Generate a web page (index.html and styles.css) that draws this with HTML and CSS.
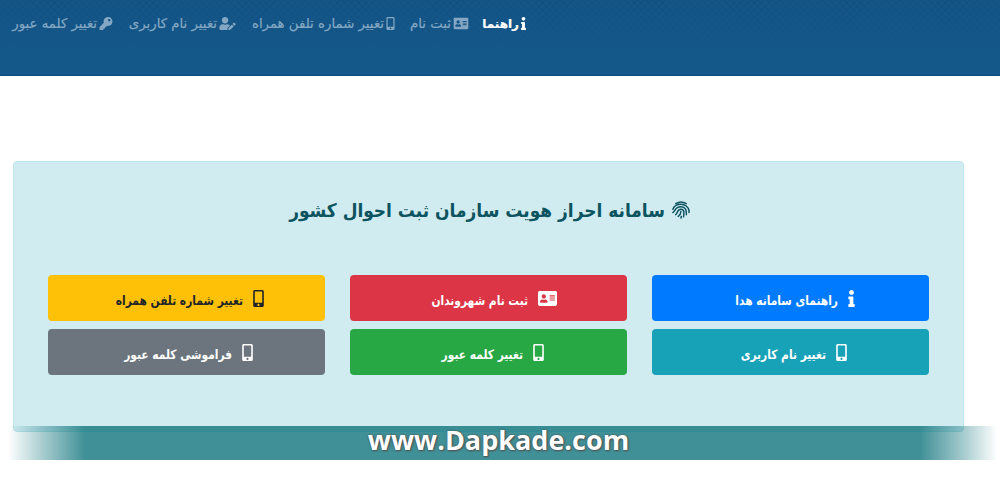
FILE: index.html
```
<!DOCTYPE html>
<html lang="fa" dir="rtl">
<head>
    <meta charset="UTF-8">
    <meta name="viewport" content="width=device-width, initial-scale=1.0">
    <title>سامانه احراز هویت</title>
    <link rel="stylesheet" href="styles.css">
</head>
<body>
    <svg class="sprite">
        <symbol id="info" viewBox="0 0 192 512"><path d="M20 424.229h20V279.771H20c-11.046 0-20-8.954-20-20V212c0-11.046 8.954-20 20-20h112c11.046 0 20 8.954 20 20v212.229h20c11.046 0 20 8.954 20 20V492c0 11.046-8.954 20-20 20H20c-11.046 0-20-8.954-20-20v-47.771c0-11.046 8.954-20 20-20zM96 0C56.235 0 24 32.235 24 72s32.235 72 72 72 72-32.235 72-72S135.764 0 96 0z"/></symbol>
        <symbol id="card" viewBox="0 0 576 512"><path d="M528 32H48C21.500 32 0 53.500 0 80v352c0 26.500 21.500 48 48 48h480c26.500 0 48-21.500 48-48V80c0-26.500-21.500-48-48-48zm-352 96c35.300 0 64 28.700 64 64s-28.700 64-64 64-64-28.700-64-64 28.700-64 64-64zm112 236.800c0 10.600-10 19.200-22.400 19.200H86.400C74 384 64 375.400 64 364.800v-19.200c0-31.800 30.100-57.600 67.200-57.600h5c12.300 5.100 25.700 8 39.800 8s27.600-2.900 39.800-8h5c37.100 0 67.200 25.800 67.200 57.600v19.200zM512 312c0 4.400-3.600 8-8 8H360c-4.400 0-8-3.600-8-8v-16c0-4.400 3.600-8 8-8h144c4.400 0 8 3.600 8 8v16zm0-64c0 4.400-3.600 8-8 8H360c-4.400 0-8-3.600-8-8v-16c0-4.400 3.600-8 8-8h144c4.400 0 8 3.600 8 8v16zm0-64c0 4.400-3.600 8-8 8H360c-4.400 0-8-3.600-8-8v-16c0-4.400 3.600-8 8-8h144c4.400 0 8 3.600 8 8v16z"/></symbol>
        <symbol id="mobile" viewBox="0 0 320 512"><path d="M272 0H48C21.500 0 0 21.500 0 48v416c0 26.500 21.500 48 48 48h224c26.500 0 48-21.500 48-48V48c0-26.500-21.500-48-48-48zM160 480c-17.700 0-32-14.300-32-32s14.300-32 32-32 32 14.300 32 32-14.300 32-32 32zm112-108c0 6.600-5.400 12-12 12H60c-6.600 0-12-5.400-12-12V60c0-6.600 5.400-12 12-12h200c6.600 0 12 5.400 12 12v312z"/></symbol>
        <symbol id="key" viewBox="0 0 512 512"><path d="M512 176C512 273.200 433.200 352 336 352c-11.200 0-22.200-1-32.800-3L279 376a24 24 0 0 1-18 8H224v40c0 13.300-10.700 24-24 24h-40v40c0 13.300-10.700 24-24 24H24c-13.300 0-24-10.700-24-24v-78c0-6.400 2.500-12.500 7-17l161.800-161.800C163 213.800 160 195.300 160 176 160 78.800 238.800 0 336 0s176 78.500 176 176zM336 128c0 26.500 21.500 48 48 48s48-21.500 48-48-21.500-48-48-48-48 21.500-48 48z"/></symbol>
        <symbol id="user-edit" viewBox="0 0 640 512"><path d="M224 256c70.700 0 128-57.300 128-128S294.700 0 224 0 96 57.300 96 128s57.300 128 128 128zm89.600 32h-16.700c-22.200 10.200-46.900 16-72.900 16s-50.600-5.800-72.900-16h-16.700C60.200 288 0 348.200 0 422.400V464c0 26.500 21.500 48 48 48h274.900c-2.400-6.800-3.400-14-2.600-21.300l6.800-60.900 1.200-11.100 7.900-7.900 77.300-77.300c-24.500-27.700-60-45.500-99.900-45.500zm45.300 145.300l-6.800 61c-1.100 10.200 7.500 18.800 17.600 17.600l60.900-6.800 137.900-137.900-71.700-71.700-137.900 137.800zM633 268.900L595.100 231c-9.300-9.300-24.500-9.300-33.800 0l-37.800 37.800-4.100 4.100 71.800 71.700 41.800-41.800c9.300-9.400 9.300-24.500 0-33.900z"/></symbol>
        <symbol id="finger" viewBox="0 0 18 18"><path fill="none" stroke="currentColor" stroke-width="1.500" stroke-linecap="round" d="M3.800 2.600Q9-.8 14.200 2.600M.9 8.200C2 5 5 3.200 9 3.200s7.300 2.800 8 6.300v2M.9 11.500C3.200 11 2.300 5.800 9 5.800c4.600 0 5.600 3.200 5.300 8M3.700 13.700C6 12.500 4.600 8.300 9 8.300c3.700 0 3 4.200 2.500 7.500M6.200 15.400c2.100-1.300 2.600-3.200 2.700-4.900M9 17l.3-1.600"/></symbol>
    </svg>

    <header class="header">
        <nav class="nav">
            <a class="nav-link active"><svg class="icon w5"><use href="#info"/></svg><span class="t37">راهنما</span></a>
            <a class="nav-link"><svg class="icon w16"><use href="#card"/></svg><span class="t43">ثبت نام</span></a>
            <a class="nav-link"><svg class="icon w9"><use href="#mobile"/></svg><span class="t135">تغییر شماره تلفن همراه</span></a>
            <a class="nav-link"><svg class="icon w17"><use href="#user-edit"/></svg><span class="t91">تغییر نام کاربری</span></a>
            <a class="nav-link"><svg class="icon w14"><use href="#key"/></svg><span class="t88">تغییر کلمه عبور</span></a>
        </nav>
    </header>

    <main class="panel">
        <h1 class="title"><svg class="icon"><use href="#finger"/></svg><span>سامانه احراز هویت سازمان ثبت احوال کشور</span></h1>
        <div class="buttons">
            <a class="btn blue"><svg class="icon w7"><use href="#info"/></svg><span class="t106">راهنمای سامانه هدا</span></a>
            <a class="btn red"><svg class="icon w19"><use href="#card"/></svg><span class="t101">ثبت نام شهروندان</span></a>
            <a class="btn yellow"><svg class="icon w11"><use href="#mobile"/></svg><span class="t128">تغییر شماره تلفن همراه</span></a>
            <a class="btn teal"><svg class="icon w11"><use href="#mobile"/></svg><span class="t86">تغییر نام کاربری</span></a>
            <a class="btn green"><svg class="icon w11"><use href="#mobile"/></svg><span class="t84">تغییر کلمه عبور</span></a>
            <a class="btn gray"><svg class="icon w11"><use href="#mobile"/></svg><span class="t105">فراموشی کلمه عبور</span></a>
        </div>
    </main>

    <div class="watermark" dir="ltr"><span>www.Dapkade.com</span></div>
</body>
</html>
```
FILE: styles.css
```
* { box-sizing: border-box; }
body { margin: 0; height: 500px; overflow: hidden; background: #fff; font-family: "DejaVu Sans", sans-serif; }
.sprite { display: none; }
.icon { fill: currentColor; flex: none; }
span { white-space: nowrap; }

.header {
    height: 76px;
    padding: 12px 474px 0 0;
    border-bottom: 1px solid #0d4c7d;
    background:
        linear-gradient(rgba(20, 87, 137, .3) 0, #145789 52px),
        repeating-linear-gradient(45deg, transparent 0 4px, rgba(5, 55, 105, .2) 4px 5px),
        repeating-linear-gradient(-45deg, transparent 0 4px, rgba(5, 55, 105, .2) 4px 5px),
        #145485;
}
.nav { display: flex; gap: 13px; }
.nav-link { display: flex; align-items: center; height: 23px; color: #84a8c3; font-size: 13.3px; -webkit-text-stroke: .2px; }
.nav-link.active { color: #fff; font-size: 12px; font-weight: bold; }
.nav-link .icon { height: 13px; margin-left: 2px; }
.w5 { width: 5px; }
.w7 { width: 7px; }
.w9 { width: 9px; }
.w11 { width: 11px; }
.w14 { width: 14px; }
.w16 { width: 16px; }
.w17 { width: 17px; }
.w19 { width: 19px; }
.t37 { width: 37px; }
.t43 { width: 43px; }
.t135 { width: 135px; }
.t91 { width: 91px; }
.t88 { width: 88px; }
.t106 { width: 106px; }
.t101 { width: 101px; }
.t128 { width: 128px; }
.t86 { width: 86px; }
.t84 { width: 84px; }
.t105 { width: 105px; }

.panel { width: 951px; height: 271px; margin: 85px 36px 0 0; padding: 35px 34px 0; background: #d1ecf1; border: 1px solid #bee5eb; border-radius: 4px; }
.title { display: flex; align-items: center; justify-content: center; height: 26px; margin: 0; padding-left: 2px; color: #0c5460; font-family: "DejaVu Sans Condensed", "DejaVu Sans", sans-serif; font-size: 18.9px; }
.title .icon { width: 18px; height: 18px; margin-left: 7px; }
.buttons { display: grid; grid-template-columns: repeat(3, 277px); justify-content: space-between; gap: 8px 0; margin-top: 52px; }
.btn { display: flex; align-items: center; justify-content: center; height: 46px; padding-left: 6px; border-radius: 4px; color: #fff; font-size: 13px; font-weight: bold; }
.btn .icon { height: 17px; margin-left: 10px; }
.btn span { padding-top: 4px; transform: scaleX(.82); transform-origin: right; }
.blue { background: #007bff; }
.red { background: #dc3545; }
.yellow { background: #ffc107; color: #212529; }
.teal { background: #17a2b8; }
.green { background: #28a745; }
.gray { background: #6c757d; }

/* site banner lies over the bottom edge of the panel */
.watermark {
    position: absolute;
    top: 426px;
    left: 0;
    width: 997px;
    height: 34px;
    text-align: center;
    color: #fff;
    font: bold 27px/28px "Open Sans", sans-serif;
    text-shadow: 0 0 2px #444, 1px 1px 2px #555;
    background: linear-gradient(90deg, rgba(22, 120, 128, 0) 8px, rgba(22, 120, 128, .4) 45px, rgba(22, 120, 128, .82) 85px, rgba(22, 120, 128, .82) 920px, rgba(22, 120, 128, .4) 962px, rgba(22, 120, 128, 0) 997px);
}
```
